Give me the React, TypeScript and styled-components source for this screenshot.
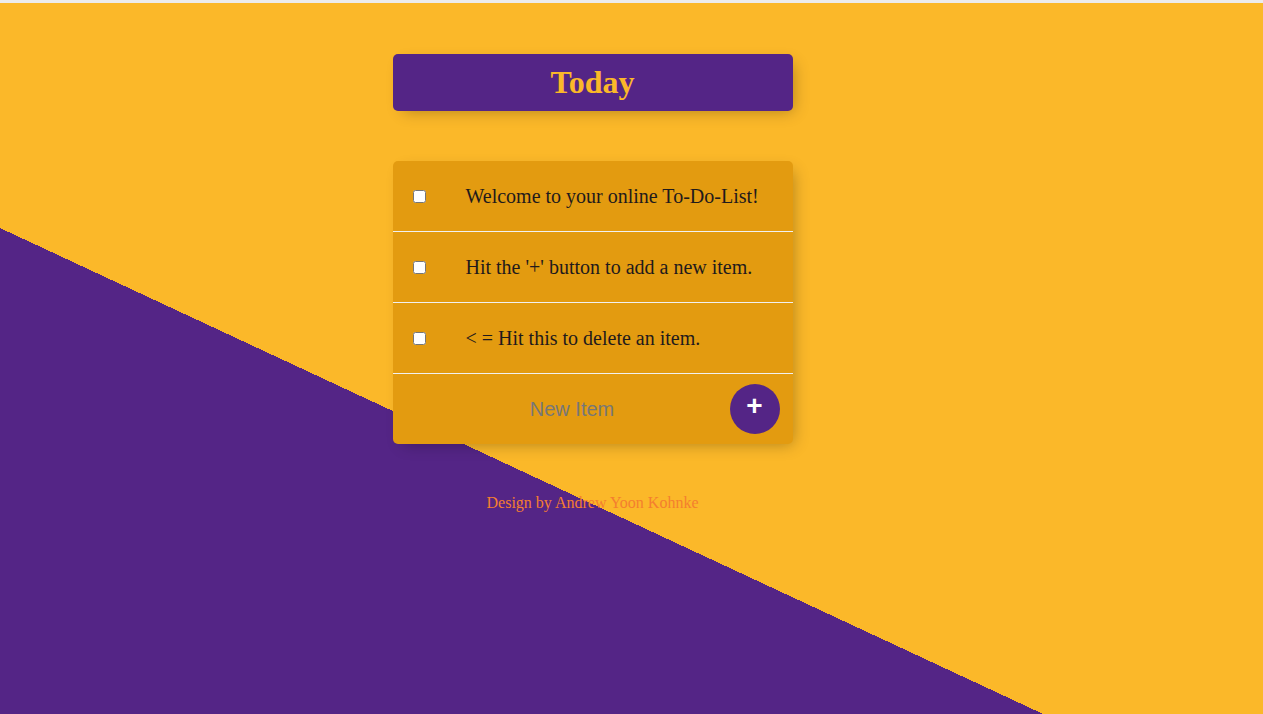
import React from "react";
import styled, { createGlobalStyle } from "styled-components";

const GlobalStyle = createGlobalStyle`
  html, body { margin: 0; padding: 0; }
  body {
    background: #ececec;
    font-family: "Liberation Serif", "Times New Roman", serif;
  }
`;

const Page = styled.main`
  margin-top: 3px;
  min-height: 711px;
  box-sizing: border-box;
  padding: 1px 78px 0 0;
  display: flex;
  flex-direction: column;
  align-items: center;
  background: linear-gradient(24.98deg, #542586 37.4%, #fbb829 37.4%);
`;

const Box = styled.section<{ $bg: string }>`
  width: 400px;
  margin: 50px auto 0;
  border-radius: 5px;
  background: ${(p) => p.$bg};
  box-shadow: 5px 5px 15px -5px rgba(0, 0, 0, 0.3);
  overflow: hidden;
`;

const Heading = styled.h1`
  margin: 0;
  padding: 10px;
  text-align: center;
  font-size: 32px;
  font-weight: bold;
  color: #fbb829;
  line-height: 37px;
`;

const Item = styled.div`
  min-height: 70px;
  display: flex;
  align-items: center;
  border-bottom: 1px solid #f1f1f1;
`;

const Check = styled.input`
  margin: 20px;
  width: 13px;
  height: 13px;
`;

const Text = styled.p`
  margin: 0;
  padding: 20px;
  font-size: 20px;
  color: #1f1a1c;
`;

const Form = styled.form`
  min-height: 70px;
  display: flex;
  align-items: center;
  margin-left: 20px;
  gap: 4px;
`;

const NewInput = styled.input`
  box-sizing: border-box;
  width: 313px;
  height: 60px;
  border: none;
  background: transparent;
  text-align: center;
  font-family: "Liberation Sans", Arial, sans-serif;
  font-size: 20px;
  padding: 0 0 0 6px;
  outline: none;
  &::placeholder { color: #777; }
`;

const AddButton = styled.button`
  width: 50px;
  height: 50px;
  border-radius: 50%;
  border: 0;
  background: #542586;
  color: #fff;
  font-family: "Liberation Sans", Arial, sans-serif;
  font-size: 28px;
  font-weight: bold;
  padding: 0 0 6px;
  line-height: 1;
  display: flex;
  align-items: center;
  justify-content: center;
`;

const Footer = styled.footer`
  margin-top: 50px;
  text-align: center;
  color: #f47f2f;
  font-size: 16px;
`;

const items = [
  "Welcome to your online To-Do-List!",
  "Hit the '+' button to add a new item.",
  "< = Hit this to delete an item.",
];

export default function App() {
  return (
    <>
      <GlobalStyle />
      <Page>
        <Box $bg="#542586">
          <Heading>Today</Heading>
        </Box>
        <Box $bg="#e39b10">
          {items.map((t) => (
            <Item key={t}>
              <Check type="checkbox" />
              <Text>{t}</Text>
            </Item>
          ))}
          <Form onSubmit={(e) => e.preventDefault()}>
            <NewInput type="text" placeholder="New Item" />
            <AddButton type="submit">+</AddButton>
          </Form>
        </Box>
        <Footer>Design by Andrew Yoon Kohnke</Footer>
      </Page>
    </>
  );
}
